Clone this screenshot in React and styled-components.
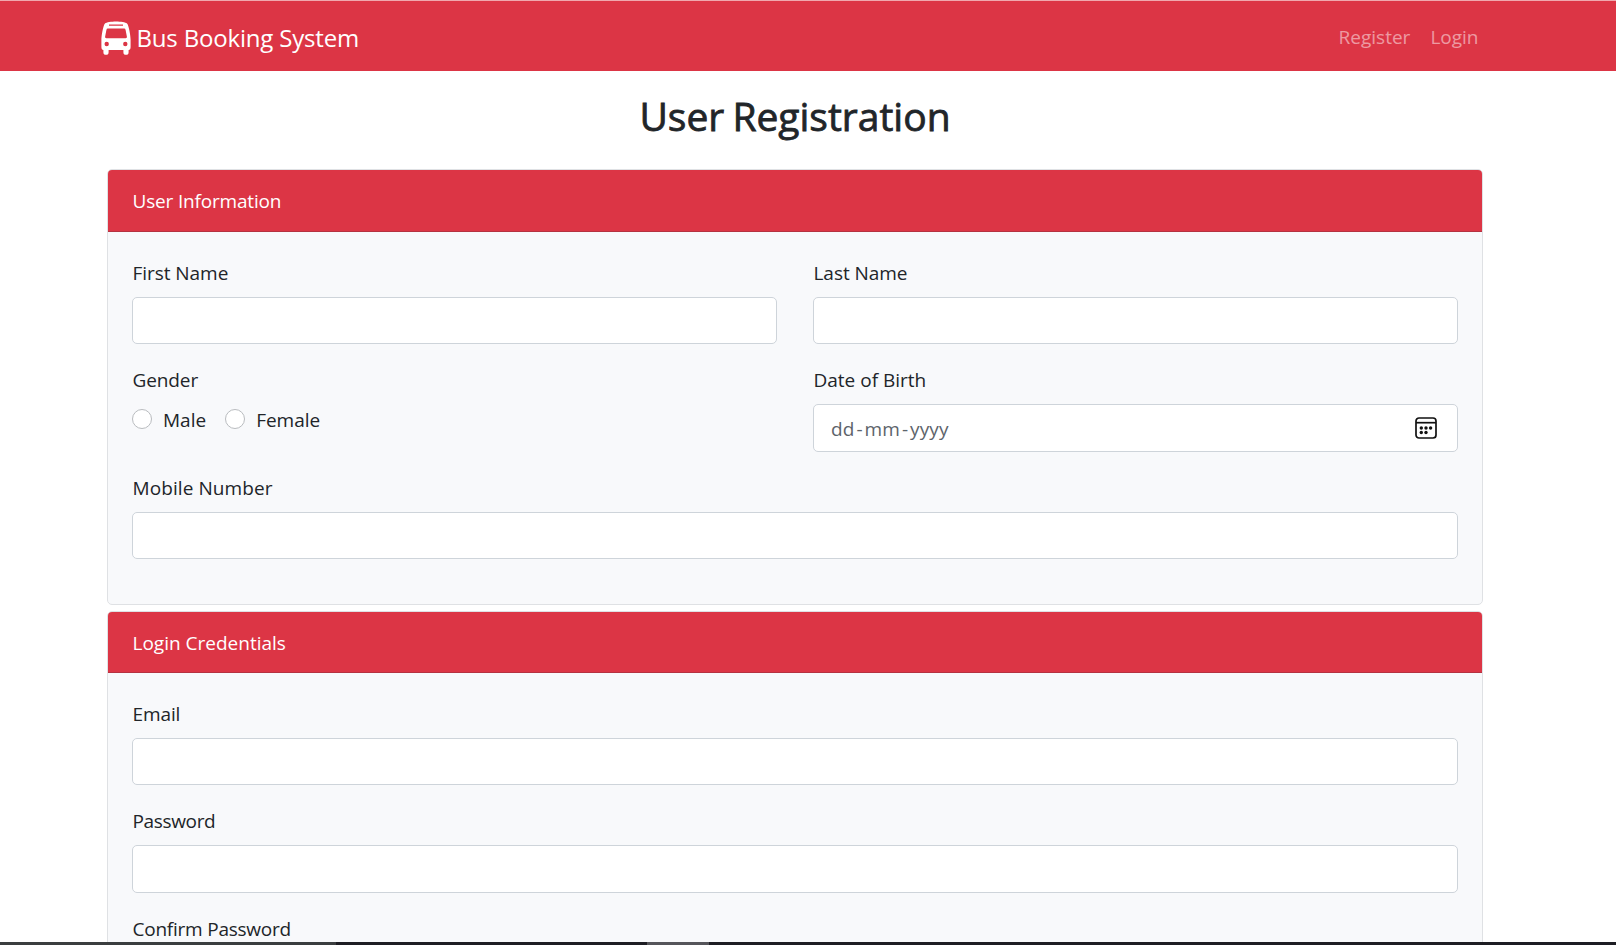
import React from "react";
import styled, { createGlobalStyle } from "styled-components";

const Global = createGlobalStyle`
  *, *::before, *::after { box-sizing: border-box; }
  html, body { margin: 0; height: 945px; overflow: hidden; background: #fff; }
  body { font-family: "Segoe UI", "Open Sans", "Noto Sans", sans-serif; font-size: 19px; color: #212529; line-height: 30px; }
`;

const Page = styled.div`
  height: 945px;
  display: flex;
  flex-direction: column;
  overflow: hidden;
`;

const Navbar = styled.nav`
  flex: none;
  height: 71px;
  display: flex;
  justify-content: space-between;
  align-items: center;
  padding: 3px 137.5px 0 100.5px;
  background: #dc3545;
  border-top: 1px solid #f0a8ae;
`;

const Brand = styled.a`
  display: flex;
  align-items: center;
  gap: 6px;
  color: #fff;
  font-size: 24px;
`;

const Links = styled.div`
  display: flex;
  gap: 20px;
  padding-bottom: 2px;
  color: rgba(255, 255, 255, 0.5);
`;

const Text = styled.span`
  white-space: nowrap;
  letter-spacing: ${(p) => p.$track || 0}px;
`;

const Main = styled.main`
  flex: 1;
  min-height: 0;
  overflow: hidden;
  width: 1376px;
  margin-left: 107px;
  display: flex;
  flex-direction: column;
`;

const Title = styled.h1`
  flex: none;
  margin: 21px 0 29px;
  height: 48px;
  line-height: 48px;
  font-size: 39px;
  font-weight: 500;
  text-align: center;
  word-spacing: -2px;
  -webkit-text-stroke: 0.8px #212529;
`;

const Card = styled.section`
  flex: none;
  height: ${(p) => p.$height}px;
  margin-bottom: 6px;
  border: 1px solid #dfe1e4;
  border-radius: 5px;
  background: #f8f9fb;
  overflow: hidden;
`;

const CardHeader = styled.header`
  height: ${(p) => p.$height}px;
  padding: 16px 24.5px 0;
  color: #fff;
  background: #dc3545;
  border-bottom: 1px solid #b53241;
`;

const CardBody = styled.div`
  padding: 26px 24px 0;
  display: grid;
  grid-template-columns: 1fr 1fr;
  column-gap: 36px;
  row-gap: 20px;
`;

const Field = styled.div`
  grid-column: ${(p) => (p.$wide ? "1 / -1" : "auto")};
  height: ${(p) => p.$height}px;
  display: flex;
  flex-direction: column;
`;

const Label = styled.label`
  flex: none;
  height: 30px;
  margin-bottom: 9px;
  padding-left: 0.5px;
`;

const Control = styled.div`
  height: ${(p) => p.$height}px;
  display: flex;
  align-items: center;
  justify-content: space-between;
  padding: 0 20px 0 17px;
  color: #5d646b;
  background: #fff;
  border: 1px solid #ced4da;
  border-radius: 5px;
`;

const DateHint = styled.span`
  display: flex;
  gap: 2px;
  padding-top: 2px;
`;

const Radios = styled.div`
  display: flex;
  gap: 19px;
`;

const RadioOption = styled.label`
  display: flex;
  gap: 11px;
  line-height: 32px;
`;

const Radio = styled.input`
  appearance: none;
  width: 20px;
  height: 20px;
  margin: 5px 0 0;
  background: #fff;
  border: 1px solid #b9bcbf;
  border-radius: 50%;
`;

const Taskbar = styled.footer`
  flex: none;
  height: 3px;
  display: flex;
  background: #1d1d23;
`;

const Task = styled.div`
  width: ${(p) => p.$width}px;
  background: ${(p) => p.$color};
`;

const BusIcon = () => (
  <svg width="30" height="34" viewBox="0 0 30 34">
    <path
      fill="#fff"
      fillRule="evenodd"
      d="M4 2.6C7 -.2 23 -.2 26 2.6C28 4.4 29.6 16 29.6 19V26Q29.6 29 27.6 29V31.2A2.5 2.5 0 0 1 22.4 31.2V29H7.6V31.2A2.5 2.5 0 0 1 2.4 31.2V29Q.4 29 .4 26V19C.4 16 2 4.4 4 2.6ZM8 3.4V4.8H22V3.4ZM6.8 7.6Q5.7 7.6 5.4 9L4.1 15.8Q4 17.3 5.5 17.3H24.5Q26 17.3 25.9 15.8L24.6 9Q24.3 7.6 23.2 7.6ZM5.7 20.8A2.2 2.2 0 1 0 5.7 25.2A2.2 2.2 0 1 0 5.7 20.8ZM24.3 20.8A2.2 2.2 0 1 0 24.3 25.2A2.2 2.2 0 1 0 24.3 20.8Z"
    />
  </svg>
);

const CalendarIcon = () => (
  <svg width="22" height="22" viewBox="0 0 22 22" fill="none" stroke="#111" strokeWidth="1.7">
    <rect x="1" y="1" width="20" height="20" rx="3" />
    <path d="M1 5.7H21" />
    <g fill="#111" stroke="none">
      <circle cx="6.3" cy="11" r="1.7" />
      <circle cx="11" cy="11" r="1.7" />
      <circle cx="15.6" cy="11" r="1.7" />
      <circle cx="6.3" cy="15.5" r="1.7" />
      <circle cx="11" cy="15.5" r="1.7" />
    </g>
  </svg>
);

const TextField = ({ label, track, wide, tall, children }) => (
  <Field $wide={wide} $height={tall ? 88 : 87}>
    <Label><Text $track={track}>{label}</Text></Label>
    <Control $height={tall ? 48 : 47}>{children}</Control>
  </Field>
);

export default function App() {
  return (
    <Page>
      <Global />
      <Navbar>
        <Brand><BusIcon /><Text $track={-0.18}>Bus Booking System</Text></Brand>
        <Links><Text>Register</Text><Text>Login</Text></Links>
      </Navbar>
      <Main>
        <Title>User Registration</Title>
        <Card $height={436}>
          <CardHeader $height={62}><Text $track={-0.18}>User Information</Text></CardHeader>
          <CardBody>
            <TextField label="First Name" track={-0.05} />
            <TextField label="Last Name" track={-0.05} />
            <Field $height={88}>
              <Label><Text $track={-0.1}>Gender</Text></Label>
              <Radios>
                <RadioOption><Radio type="radio" name="gender" /><Text>Male</Text></RadioOption>
                <RadioOption><Radio type="radio" name="gender" /><Text>Female</Text></RadioOption>
              </Radios>
            </Field>
            <TextField label="Date of Birth" tall>
              <DateHint>
                <Text $track={0.1}>dd</Text><Text>-</Text><Text $track={0.1}>mm</Text><Text>-</Text><Text $track={0.1}>yyyy</Text>
              </DateHint>
              <CalendarIcon />
            </TextField>
            <TextField label="Mobile Number" track={0.08} wide />
          </CardBody>
        </Card>
        <Card $height={480}>
          <CardHeader $height={61}><Text>Login Credentials</Text></CardHeader>
          <CardBody>
            <TextField label="Email" track={-0.1} wide />
            <TextField label="Password" track={-0.35} wide tall />
            <TextField label="Confirm Password" track={-0.23} wide />
          </CardBody>
        </Card>
      </Main>
      <Taskbar>
        <Task $width={336} $color="#3b3e3f" />
        <Task $width={311} $color="#1d1d23" />
        <Task $width={62} $color="#55555a" />
      </Taskbar>
    </Page>
  );
}
